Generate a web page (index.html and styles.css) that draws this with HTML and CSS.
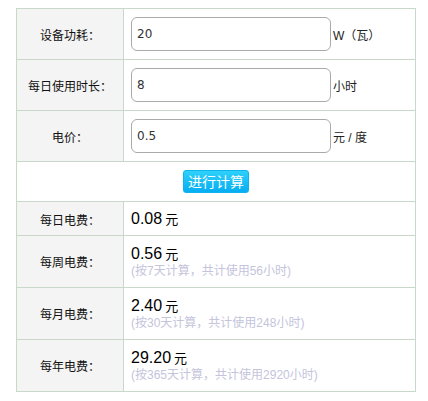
FILE: index.html
```html
<!DOCTYPE html>
<html lang="zh-CN">
<head>
  <meta charset="UTF-8">
  <meta name="viewport" content="width=device-width, initial-scale=1.0">
  <title>电费计算器</title>
  <link rel="stylesheet" href="styles.css">
</head>
<body>
  <div class="calc">
    <table class="calc-table">
      <tr>
        <th>设备功耗：</th>
        <td><input class="field" type="text" id="power" value="20"><span class="unit">W（瓦）</span></td>
      </tr>
      <tr>
        <th>每日使用时长：</th>
        <td><input class="field" type="text" id="hours" value="8"><span class="unit">小时</span></td>
      </tr>
      <tr>
        <th>电价：</th>
        <td><input class="field" type="text" id="price" value="0.5"><span class="unit">元 / 度</span></td>
      </tr>
      <tr>
        <td class="action" colspan="2"><button class="btn" id="calc-btn">进行计算</button></td>
      </tr>
      <tr class="short">
        <th>每日电费：</th>
        <td><span class="money" id="day">0.08</span><span class="yuan">元</span></td>
      </tr>
      <tr>
        <th>每周电费：</th>
        <td>
          <div><span class="money" id="week">0.56</span><span class="yuan">元</span></div>
          <div class="note">(按7天计算，共计使用<span id="week-h">56</span>小时)</div>
        </td>
      </tr>
      <tr>
        <th>每月电费：</th>
        <td>
          <div><span class="money" id="month">2.40</span><span class="yuan">元</span></div>
          <div class="note">(按30天计算，共计使用<span id="month-h">248</span>小时)</div>
        </td>
      </tr>
      <tr>
        <th>每年电费：</th>
        <td>
          <div><span class="money" id="year">29.20</span><span class="yuan">元</span></div>
          <div class="note">(按365天计算，共计使用<span id="year-h">2920</span>小时)</div>
        </td>
      </tr>
    </table>
  </div>
</body>
</html>
```

FILE: styles.css
```css
body {
  margin: 8px;
  font-family: "DejaVu Sans", "Noto Sans CJK SC", sans-serif;
  font-size: 12px;
  color: #222;
}
.calc {
  padding: 0 8px;
}
.calc-table {
  width: 400px;
  border-collapse: collapse;
}
.calc-table th,
.calc-table td {
  border: 1px solid #c9d9c9;
  padding: 8px 7px;
  vertical-align: middle;
}
.calc-table th {
  width: 106px;
  background-color: #f4f4f4;
  font-weight: normal;
  font-family: "Noto Sans CJK SC", sans-serif;
  font-size: 12px;
  color: #111;
  text-align: center;
  padding-left: 0;
  padding-right: 0;
}
.field {
  box-sizing: border-box;
  width: 200px;
  height: 34px;
  padding: 0 5px;
  border: 1px solid #aaa;
  border-radius: 6px;
  font-family: "DejaVu Sans", sans-serif;
  font-size: 12px;
  color: #333;
  vertical-align: middle;
  margin: 0;
}
.unit {
  margin-left: 2px;
  vertical-align: middle;
  font-family: "Liberation Sans", "Noto Sans CJK SC", sans-serif;
  font-size: 12px;
}
.action {
  text-align: center;
}
.btn {
  height: 23px;
  padding: 0 4px;
  border: 1px solid #0fb4ee;
  border-radius: 3px;
  background: linear-gradient(#2fd0fb, #05aef2);
  color: #fff;
  font-family: "Noto Sans CJK SC", sans-serif;
  font-size: 14px;
  line-height: 21px;
  cursor: pointer;
  vertical-align: middle;
}
.calc-table tr.short td,
.calc-table tr.short th {
  padding-top: 7px;
  padding-bottom: 6px;
}
.money {
  font-family: "Liberation Sans", sans-serif;
  font-size: 16px;
  line-height: 20px;
  color: #000;
}
.yuan {
  margin-left: 3px;
  font-family: "Noto Sans CJK SC", sans-serif;
  font-size: 13px;
  color: #000;
}
.note {
  font-family: "Liberation Sans", "Noto Sans CJK SC", sans-serif;
  font-size: 12px;
  line-height: 15px;
  color: #c4c4dc;
}
```
